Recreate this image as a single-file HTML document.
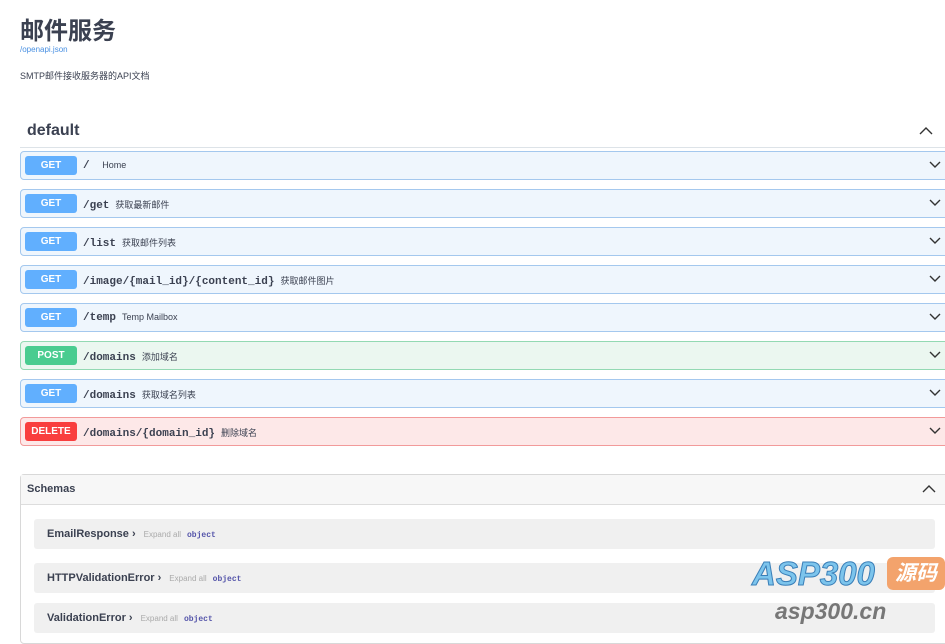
<!DOCTYPE html><html><head><meta charset="utf-8"><style>
*{margin:0;padding:0;box-sizing:border-box}
body{width:945px;height:632px;overflow:hidden;background:#fff;font-family:"Liberation Sans","Noto Sans CJK SC",sans-serif;color:#3b4151;position:relative}
.a{position:absolute}
.row{position:absolute;left:20px;width:940px;height:29px;border:1px solid;border-radius:4px}
.g{background:#eff6fd;border-color:#a4c8ee}
.p{background:#ebf7f0;border-color:#93d9b3}
.d{background:#fde8e8;border-color:#f29a9a}
.b{position:absolute;left:4px;top:4px;width:52px;height:19px;border-radius:3px;color:#fff;font-weight:bold;font-size:10px;text-align:center;line-height:19px}
.path{position:absolute;left:62px;top:8px;font-family:"Liberation Mono",monospace;font-size:11px;font-weight:bold;color:#3b4151;white-space:nowrap}
.path span{font-family:"Liberation Sans","Noto Sans CJK SC",sans-serif;font-weight:normal;font-size:9px;margin-left:6px}
.chev{position:absolute;right:18px;top:9px}
.s{position:absolute;left:34px;width:901px;height:30px;background:#f0f0f0;border-radius:3px}
.s b{position:absolute;left:13px;top:9px;font-size:11px;color:#3b4151}
.s i{font-style:normal;font-size:8px;color:#aaa;font-weight:normal;margin-left:8px}
.s em{font-style:normal;font-family:"Liberation Mono",monospace;font-size:8px;color:#55a;font-weight:bold;margin-left:6px}
</style></head><body>
<div class="a" style="left:20px;top:11px;font-size:24px;font-weight:bold;color:#3b4151">邮件服务</div>
<div class="a" style="left:20px;top:45px;font-size:8px;color:#4990e2">/openapi.json</div>
<div class="a" style="left:20px;top:69px;font-size:9px;color:#3b4151">SMTP邮件接收服务器的API文档</div>
<div class="a" style="left:27px;top:122px;font-size:16px;font-weight:bold">default</div>
<svg class="a" style="left:919px;top:126px" width="14" height="9"><path d="M1 8L7 2L13 8" fill="none" stroke="#333" stroke-width="1.4"/></svg>
<div class="a" style="left:20px;top:147px;width:925px;height:1px;background:#dde3e8"></div>

<div class="row g" style="top:151px"><div class="b" style="background:#61affe">GET</div><div class="path">/ <span>Home</span></div><svg class="chev" width="12" height="8"><path d="M1 1L6 6L11 1" fill="none" stroke="#333" stroke-width="1.4"/></svg></div>
<div class="row g" style="top:189px"><div class="b" style="background:#61affe">GET</div><div class="path">/get<span>获取最新邮件</span></div><svg class="chev" width="12" height="8"><path d="M1 1L6 6L11 1" fill="none" stroke="#333" stroke-width="1.4"/></svg></div>
<div class="row g" style="top:227px"><div class="b" style="background:#61affe">GET</div><div class="path">/list<span>获取邮件列表</span></div><svg class="chev" width="12" height="8"><path d="M1 1L6 6L11 1" fill="none" stroke="#333" stroke-width="1.4"/></svg></div>
<div class="row g" style="top:265px"><div class="b" style="background:#61affe">GET</div><div class="path">/image/{mail_id}/{content_id}<span>获取邮件图片</span></div><svg class="chev" width="12" height="8"><path d="M1 1L6 6L11 1" fill="none" stroke="#333" stroke-width="1.4"/></svg></div>
<div class="row g" style="top:303px"><div class="b" style="background:#61affe">GET</div><div class="path">/temp<span>Temp Mailbox</span></div><svg class="chev" width="12" height="8"><path d="M1 1L6 6L11 1" fill="none" stroke="#333" stroke-width="1.4"/></svg></div>
<div class="row p" style="top:341px"><div class="b" style="background:#49cc90">POST</div><div class="path">/domains<span>添加域名</span></div><svg class="chev" width="12" height="8"><path d="M1 1L6 6L11 1" fill="none" stroke="#333" stroke-width="1.4"/></svg></div>
<div class="row g" style="top:379px"><div class="b" style="background:#61affe">GET</div><div class="path">/domains<span>获取域名列表</span></div><svg class="chev" width="12" height="8"><path d="M1 1L6 6L11 1" fill="none" stroke="#333" stroke-width="1.4"/></svg></div>
<div class="row d" style="top:417px"><div class="b" style="background:#f93e3e">DELETE</div><div class="path">/domains/{domain_id}<span>删除域名</span></div><svg class="chev" width="12" height="8"><path d="M1 1L6 6L11 1" fill="none" stroke="#333" stroke-width="1.4"/></svg></div>

<div class="a" style="left:20px;top:474px;width:940px;height:170px;border:1px solid #d8d8d8;border-radius:4px"></div>
<div class="a" style="left:21px;top:475px;width:924px;height:30px;background:#f7f7f7;border-bottom:1px solid #ddd"></div>
<div class="a" style="left:27px;top:483px;font-size:11px;font-weight:bold">Schemas</div>
<svg class="a" style="left:922px;top:484px" width="14" height="9"><path d="M1 8L7 2L13 8" fill="none" stroke="#333" stroke-width="1.4"/></svg>
<div class="s" style="top:519px"><b>EmailResponse ›<i>Expand all</i><em>object</em></b></div>
<div class="s" style="top:563px"><b>HTTPValidationError ›<i>Expand all</i><em>object</em></b></div>
<div class="s" style="top:603px"><b>ValidationError ›<i>Expand all</i><em>object</em></b></div>

<div class="a" style="left:752px;top:555px;font-size:33px;font-weight:bold;font-style:italic;color:#7cc4ec;-webkit-text-stroke:1px #3a7fb8;letter-spacing:0px">ASP300</div>
<div class="a" style="left:887px;top:557px;width:58px;height:33px;background:#f3a36c;border-radius:6px;color:#fff;font-size:21px;font-style:italic;font-weight:bold;text-align:center;line-height:33px">源码</div>
<div class="a" style="left:775px;top:598px;font-size:23px;font-weight:bold;font-style:italic;color:#777">asp300.cn</div>
</body></html>
